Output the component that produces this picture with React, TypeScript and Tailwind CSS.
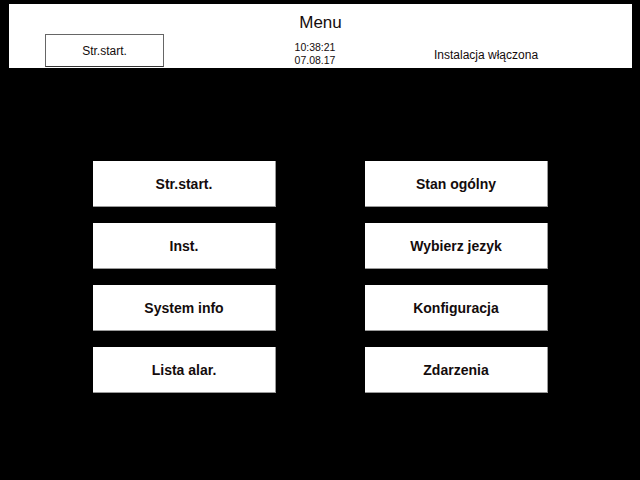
const buttons = [
  ['Str.start.', 'Stan ogólny'],
  ['Inst.', 'Wybierz jezyk'],
  ['System info', 'Konfiguracja'],
  ['Lista alar.', 'Zdarzenia'],
]

export default function App() {
  return (
    <div className="h-[480px] w-[640px] overflow-hidden bg-black pl-[9px] pt-1 font-['Liberation_Sans',Arial,sans-serif] text-[#140c0c]">
      <header className="flex h-16 w-[623px] flex-col bg-white">
        <h1 className="h-[30px] pt-[9px] text-center text-[17px] leading-5">Menu</h1>
        <div className="flex items-start pl-9">
          <div className="flex h-[33px] w-[119px] items-center justify-center border border-[#666] border-b-[#333] pt-px text-[12px]">
            Str.start.
          </div>
          <div className="ml-[121px] w-[60px] pt-[7px] text-center text-[10.5px] leading-[13px]">
            <div>10:38:21</div>
            <div>07.08.17</div>
          </div>
          <div className="ml-[89px] pt-[14px] text-[12px] leading-[14px]">Instalacja włączona</div>
        </div>
      </header>

      <div className="ml-[84px] mt-[93px] flex flex-col gap-4">
        {buttons.map(([left, right]) => (
          <div key={left} className="flex gap-[89px]">
            {[left, right].map((label) => (
              <div
                key={label}
                className="flex h-[46px] w-[183px] items-center justify-center border-b border-r border-[#9a9a9a] bg-white pt-[2px] text-[14px] font-bold"
              >
                {label}
              </div>
            ))}
          </div>
        ))}
      </div>
    </div>
  )
}
